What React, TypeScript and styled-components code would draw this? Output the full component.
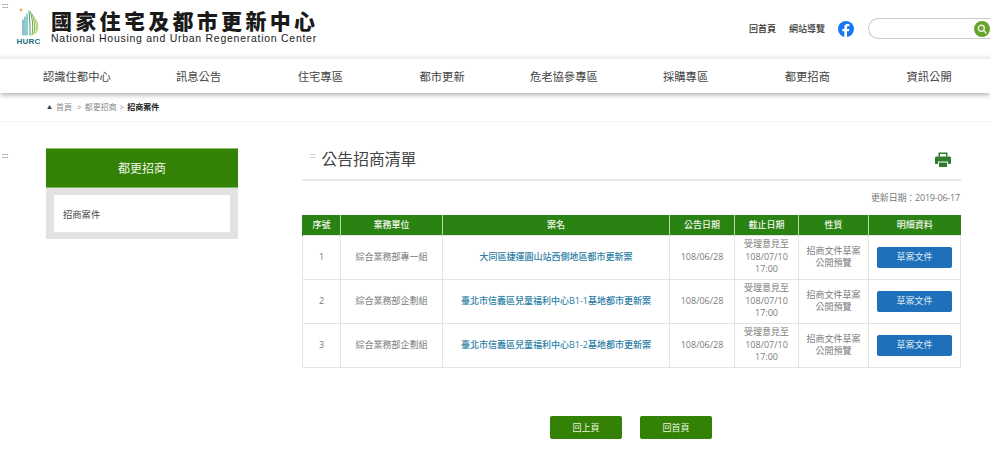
import { FC } from 'react';
import styled, { createGlobalStyle } from 'styled-components';

const GlobalStyle = createGlobalStyle`
  html, body {
    margin: 0;
    padding: 0;
    background: #fff;
  }

  body {
    font-family: "Open Sans", "Noto Sans CJK TC", sans-serif;
    color: #666;
  }

  a {
    text-decoration: none;
    color: inherit;
  }

  * {
    box-sizing: border-box;
  }
`;

const Page = styled.div`
  position: relative;
  width: 990px;
  height: 461px;
  overflow: hidden;
  background: #fff;
`;

const AccessKey = styled.span`
  font-size: 8px;
  line-height: 7px;
  letter-spacing: 0;
  color: #333;
`;

const TopAccess = styled(AccessKey)`
  position: absolute;
  left: 2px;
  top: 1px;
`;

const Header = styled.header`
  display: flex;
  align-items: center;
  justify-content: space-between;
  height: 57px;
  padding-left: 16px;
`;

const Brand = styled.a`
  display: flex;
  align-items: flex-start;
  gap: 9px;
`;

const LogoMark = styled.div`
  display: flex;
  flex-direction: column;
  align-items: center;
  width: 25px;
  height: 48px;
  padding-top: 3px;
`;

const LogoCode = styled.span`
  font-family: "Liberation Sans", sans-serif;
  font-size: 8px;
  line-height: 9px;
  font-weight: 700;
  letter-spacing: 0.25px;
  white-space: nowrap;
  color: #1d6f7c;
`;

const BrandText = styled.div`
  display: flex;
  flex-direction: column;
  padding-top: 3px;
`;

const BrandName = styled.span`
  margin-left: 1px;
  font-family: "Noto Sans CJK TC", sans-serif;
  font-size: 21px;
  line-height: 24px;
  font-weight: 900;
  letter-spacing: 3.3px;
  white-space: nowrap;
  color: #1a1a1a;
`;

const BrandEnglish = styled.span`
  margin-left: 1px;
  font-family: "Liberation Sans", sans-serif;
  font-size: 10.5px;
  line-height: 12px;
  letter-spacing: 0.73px;
  white-space: nowrap;
  color: #222;
`;

const HeaderTools = styled.div`
  display: flex;
  align-items: center;
  height: 20px;
`;

const ToolLink = styled.a`
  margin-right: 13px;
  font-size: 9px;
  font-weight: 500;
  color: #333;
`;

const FacebookLink = styled.a`
  display: flex;
  margin-right: 14px;
`;

const SearchBox = styled.div`
  display: flex;
  align-items: center;
  justify-content: flex-end;
  width: 122px;
  height: 21px;
  border: 1px solid #ccc;
  border-right: none;
  border-radius: 11px 0 0 11px;
`;

const SearchButton = styled.button`
  display: flex;
  align-items: center;
  justify-content: center;
  width: 16px;
  height: 16px;
  padding: 0;
  border: none;
  border-radius: 50%;
  background: #67a32f;
`;

const Nav = styled.nav`
  display: flex;
  height: 36px;
  padding-left: 16px;
  padding-bottom: 1px;
  border-top: 2px solid #eee;
  background: #fff;
  box-shadow: 0 2px 5px rgba(0, 0, 0, 0.3);
`;

const NavItem = styled.a`
  flex: 1;
  display: flex;
  align-items: center;
  justify-content: center;
  font-size: 11.3px;
  font-weight: 400;
  color: #444;
`;

const Breadcrumb = styled.div`
  display: flex;
  align-items: center;
  gap: 3px;
  height: 29px;
  padding-left: 47px;
  padding-bottom: 2px;
  border-bottom: 1px solid #f3f3f3;
  font-size: 8px;
  color: #8a8a8a;
`;

const Crumb = styled.a<{ $current?: boolean }>`
  font-weight: ${({ $current }) => ($current ? 700 : 400)};
  color: ${({ $current }) => ($current ? '#222' : '#8a8a8a')};
`;

const CrumbMark = styled.span`
  margin-right: 1px;
  font-size: 5px;
  color: #444;
`;

const Main = styled.main`
  display: grid;
  grid-template-columns: 46px 192px 64px 659px;
  padding-top: 26px;
`;

const SideAccess = styled.div`
  padding: 1px 0 0 2px;
  line-height: 7px;
`;

const Sidebar = styled.aside`
  display: flex;
  flex-direction: column;
  height: 91px;
`;

const SideTitle = styled.h2`
  display: flex;
  align-items: center;
  justify-content: center;
  height: 40px;
  margin: 0;
  background: #338205;
  border-top: 1px solid #8fc06c;
  border-bottom: 1px solid #7fb85a;
  font-size: 12px;
  font-weight: 400;
  color: #eef5e8;
`;

const SideMenu = styled.div`
  flex: 1;
  padding: 7px 8px;
  background: #e2e2e2;
`;

const SideItem = styled.a`
  display: flex;
  align-items: center;
  height: 100%;
  padding-left: 9px;
  background: #fff;
  font-size: 9.3px;
  color: #444;
`;

const Spacer = styled.div``;

const Content = styled.section`
  display: flex;
  flex-direction: column;
`;

const TitleBar = styled.div`
  display: flex;
  align-items: flex-start;
  justify-content: space-between;
  height: 33px;
  padding-right: 10px;
  border-bottom: 2px solid #e8e8e8;
`;

const TitleWrap = styled.div`
  display: flex;
  align-items: flex-start;
  gap: 6px;
  padding: 0 0 0 8px;
`;

const TitleMark = styled.span`
  margin-top: 4px;
  font-size: 7px;
  line-height: 7px;
  color: #888;
`;

const Title = styled.h1`
  margin: 0;
  font-size: 15.8px;
  line-height: 22px;
  font-weight: 400;
  color: #444;
`;

const PrintButton = styled.a`
  display: flex;
  margin-top: 4px;
`;

const UpdateDate = styled.div`
  height: 34px;
  padding: 11px 1px 0 0;
  font-size: 9px;
  line-height: 12px;
  letter-spacing: -0.2px;
  text-align: right;
  color: #777;
`;

const Table = styled.table`
  width: 658px;
  border-collapse: collapse;
  table-layout: fixed;
  font-size: 9px;
  line-height: 12.5px;
`;

const HeadCell = styled.th`
  height: 20px;
  padding: 0;
  background: #2a8212;
  border-left: 1px solid #b9d8ac;
  font-size: 9px;
  font-weight: 500;
  color: #f2f8ee;

  &:first-child {
    border-left-color: #2a8212;
  }
`;

const Cell = styled.td`
  height: 44px;
  padding: 0;
  border: 1px solid #e3e3e3;
  text-align: center;
  color: #7a7a7a;
`;

const CaseLink = styled.a`
  font-weight: 500;
  color: #2b7ea6;
`;

const DraftButton = styled.a`
  display: flex;
  align-items: center;
  justify-content: center;
  width: 75px;
  height: 21px;
  margin: 0 auto;
  border-radius: 2px;
  background: #1f70bb;
  color: #dfeaf5;
`;

const Footer = styled.div`
  display: flex;
  justify-content: center;
  gap: 18px;
  margin-top: 48px;
  padding-right: 1px;
`;

const FooterButton = styled.a`
  display: flex;
  align-items: center;
  justify-content: center;
  width: 72px;
  height: 23px;
  border-radius: 2px;
  background: #338205;
  font-size: 9px;
  color: #eaf3e2;
`;

const columns = [38, 102, 227, 65, 64, 70, 92];

const heads = ['序號', '業務單位', '案名', '公告日期', '截止日期', '性質', '明細資料'];

const rows = [
  { no: 1, unit: '綜合業務部專一組', name: '大同區捷運圓山站西側地區都市更新案' },
  { no: 2, unit: '綜合業務部企劃組', name: '臺北市信義區兒童福利中心B1-1基地都市更新案' },
  { no: 3, unit: '綜合業務部企劃組', name: '臺北市信義區兒童福利中心B1-2基地都市更新案' },
];

const navItems = ['認識住都中心', '訊息公告', '住宅專區', '都市更新', '危老協參專區', '採購專區', '都更招商', '資訊公開'];

const Logo: FC = () => (
  <svg width="25" height="29" viewBox="0 0 25 29" fill="none">
    <circle cx="5" cy="2" r="1.4" fill="#e8b23c" />
    <g strokeWidth="1" strokeLinecap="round">
      <path d="M7 12v15" stroke="#1f7f9c" />
      <path d="M9 9v18" stroke="#1f8fa8" />
      <path d="M11 6v21" stroke="#2a9a94" />
      <path d="M13 3c.8 8 1.200 16 1 24" stroke="#3f9f6a" />
      <path d="M14.500 4c2 7 3 15 1.500 23" stroke="#57a54a" />
      <path d="M16 6c2.500 6 3.500 13 1.800 20" stroke="#7db544" />
      <path d="M18 9c2.500 5 3 11 1.500 16" stroke="#a3c14a" />
      <path d="M20 12c2 4 2.300 8 1.200 11" stroke="#bccb57" />
    </g>
  </svg>
);

const FacebookIcon: FC = () => (
  <svg width="16" height="16" viewBox="0 0 16 16">
    <circle cx="8" cy="8" r="8" fill="#1877f2" />
    <path d="M11 10.300l.4-2.300H9V6.500c0-.7.3-1.200 1.300-1.200h1.100v-2c-.6-.1-1.300-.2-1.900-.2-2 0-3.200 1.200-3.200 3.300V8H4.300v2.300h2V16h2.700v-5.700z" fill="#fff" />
  </svg>
);

const SearchIcon: FC = () => (
  <svg width="10" height="10" viewBox="0 0 10 10" fill="none" stroke="#e8f2dc" strokeWidth="1.4">
    <circle cx="4.300" cy="4.300" r="3" />
    <path d="M6.500 6.500L9 9" strokeLinecap="round" />
  </svg>
);

const PrintIcon: FC = () => (
  <svg width="16" height="15" viewBox="0 0 16 15" fill="#2f7d2a">
    <path d="M3.500 0.500h9v4h-1.500v-2.500h-6v2.500h-1.500z" />
    <path d="M1.500 4.500h13c.8 0 1.500.7 1.500 1.500v5c0 .6-.4 1-1 1h-2v-2.500h-10v2.500h-2c-.6 0-1-.4-1-1v-5c0-.8.7-1.500 1.500-1.500z" />
    <path d="M4 10.500h8v4.500h-8z" />
  </svg>
);

const App: FC = () => (
  <Page>
    <GlobalStyle />
    <TopAccess>:::</TopAccess>

    <Header>
      <Brand href="#">
        <LogoMark>
          <Logo />
          <LogoCode>HURC</LogoCode>
        </LogoMark>
        <BrandText>
          <BrandName>國家住宅及都市更新中心</BrandName>
          <BrandEnglish>National Housing and Urban Regeneration Center</BrandEnglish>
        </BrandText>
      </Brand>
      <HeaderTools>
        <ToolLink href="#">回首頁</ToolLink>
        <ToolLink href="#">網站導覽</ToolLink>
        <FacebookLink href="#">
          <FacebookIcon />
        </FacebookLink>
        <SearchBox>
          <SearchButton type="button">
            <SearchIcon />
          </SearchButton>
        </SearchBox>
      </HeaderTools>
    </Header>

    <Nav>
      {navItems.map((item) => (
        <NavItem href="#" key={item}>
          {item}
        </NavItem>
      ))}
    </Nav>

    <Breadcrumb>
      <CrumbMark>▲</CrumbMark>
      <Crumb href="#">首頁</Crumb>
      <span>&nbsp;&gt;</span>
      <Crumb href="#">都更招商</Crumb>
      <span>&gt;</span>
      <Crumb href="#" $current>
        招商案件
      </Crumb>
    </Breadcrumb>

    <Main>
      <SideAccess>
        <AccessKey>:::</AccessKey>
      </SideAccess>

      <Sidebar>
        <SideTitle>都更招商</SideTitle>
        <SideMenu>
          <SideItem href="#">招商案件</SideItem>
        </SideMenu>
      </Sidebar>

      <Spacer />

      <Content>
        <TitleBar>
          <TitleWrap>
            <TitleMark>:::</TitleMark>
            <Title>公告招商清單</Title>
          </TitleWrap>
          <PrintButton href="#">
            <PrintIcon />
          </PrintButton>
        </TitleBar>

        <UpdateDate>更新日期：2019-06-17</UpdateDate>

        <Table>
          <colgroup>
            {columns.map((width, index) => (
              <col key={index} style={{ width }} />
            ))}
          </colgroup>
          <thead>
            <tr>
              {heads.map((head) => (
                <HeadCell key={head}>{head}</HeadCell>
              ))}
            </tr>
          </thead>
          <tbody>
            {rows.map((row) => (
              <tr key={row.no}>
                <Cell>{row.no}</Cell>
                <Cell>{row.unit}</Cell>
                <Cell>
                  <CaseLink href="#">{row.name}</CaseLink>
                </Cell>
                <Cell>108/06/28</Cell>
                <Cell>
                  受理意見至
                  <br />
                  108/07/10
                  <br />
                  17:00
                </Cell>
                <Cell>
                  招商文件草案
                  <br />
                  公開預覽
                </Cell>
                <Cell>
                  <DraftButton href="#">草案文件</DraftButton>
                </Cell>
              </tr>
            ))}
          </tbody>
        </Table>

        <Footer>
          <FooterButton href="#">回上頁</FooterButton>
          <FooterButton href="#">回首頁</FooterButton>
        </Footer>
      </Content>
    </Main>
  </Page>
);

export default App;
